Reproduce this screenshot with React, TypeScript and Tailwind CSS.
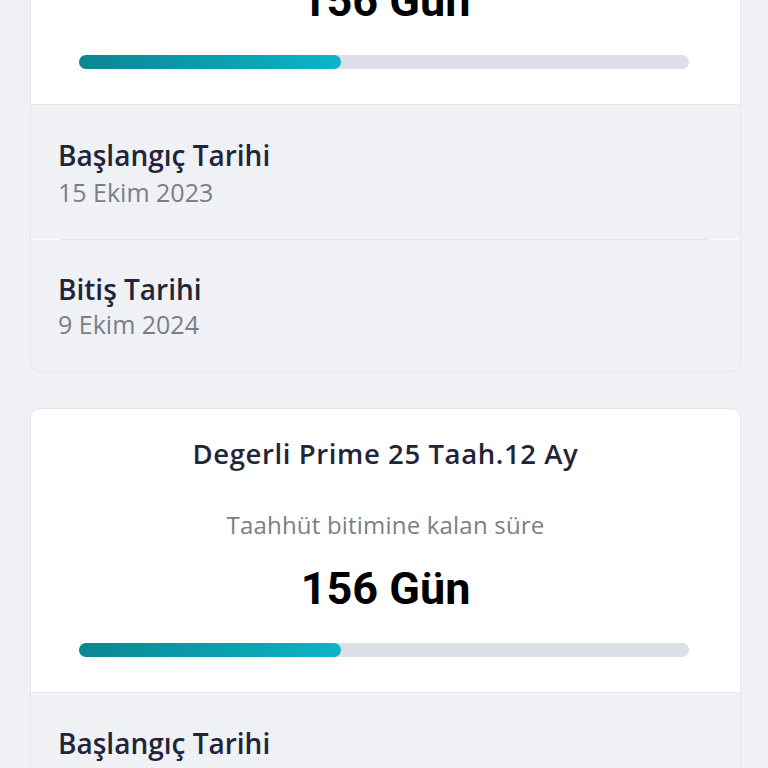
const plan = {
  name: "Degerli Prime 25 Taah.12 Ay",
  remaining: "156 Gün",
  percent: 43,
  start: "15 Ekim 2023",
  end: "9 Ekim 2024",
};

const PlanCard = (props: typeof plan) => {
  return (
    <section className="ml-[30px] mr-[27px] rounded-[10px] border border-[#e4e6eb] bg-[#eff1f5] overflow-hidden">
      <div className="bg-white flex flex-col items-center pt-[27px] pb-[35px]">
        <h2 className="text-[27.5px] leading-[36px] font-semibold text-[#22253a] tracking-[0.6px]">
          {props.name}
        </h2>
        <p className="mt-[35px] text-[24px] leading-[36px] text-[#7b7e88] tracking-[0.2px]">
          Taahhüt bitimine kalan süre
        </p>
        <p className="mt-[18px] text-[45px] leading-[56px] font-bold text-black font-[Roboto,sans-serif]">
          {props.remaining}
        </p>
        <div className="mt-[26px] self-stretch pl-[48px] pr-[51px]">
          <div className="h-[14px] rounded-full bg-[#dde0e8]">
            <div
              className="h-full rounded-full bg-gradient-to-r from-[#098791] to-[#0bb4c9]"
              style={{ width: `${props.percent}%` }}
            />
          </div>
        </div>
      </div>
      <div className="h-px bg-[#e6e8ed]" />
      <div className="px-[27px] pt-[33px] pb-[32px]">
        <p className="text-[28px] leading-[34px] font-semibold text-[#22253a]">Başlangıç Tarihi</p>
        <p className="mt-[5px] text-[25px] leading-[30px] text-[#7b7e88]">{props.start}</p>
      </div>
      <div className="h-px bg-white flex">
        <div className="flex-1 mx-[30px] bg-[#e3e5ea]" />
      </div>
      <div className="px-[27px] pt-[32px] pb-[32px]">
        <p className="text-[28px] leading-[34px] font-semibold text-[#22253a]">Bitiş Tarihi</p>
        <p className="mt-[3px] text-[25px] leading-[30px] text-[#7b7e88]">{props.end}</p>
      </div>
    </section>
  );
};

export default function App() {
  return (
    <div className="h-[768px] overflow-hidden bg-[#eff1f5] font-['Open_Sans',sans-serif]">
      <div className="-mt-[180px] flex flex-col gap-[36px]">
        <PlanCard {...plan} />
        <PlanCard {...plan} />
      </div>
    </div>
  );
}
